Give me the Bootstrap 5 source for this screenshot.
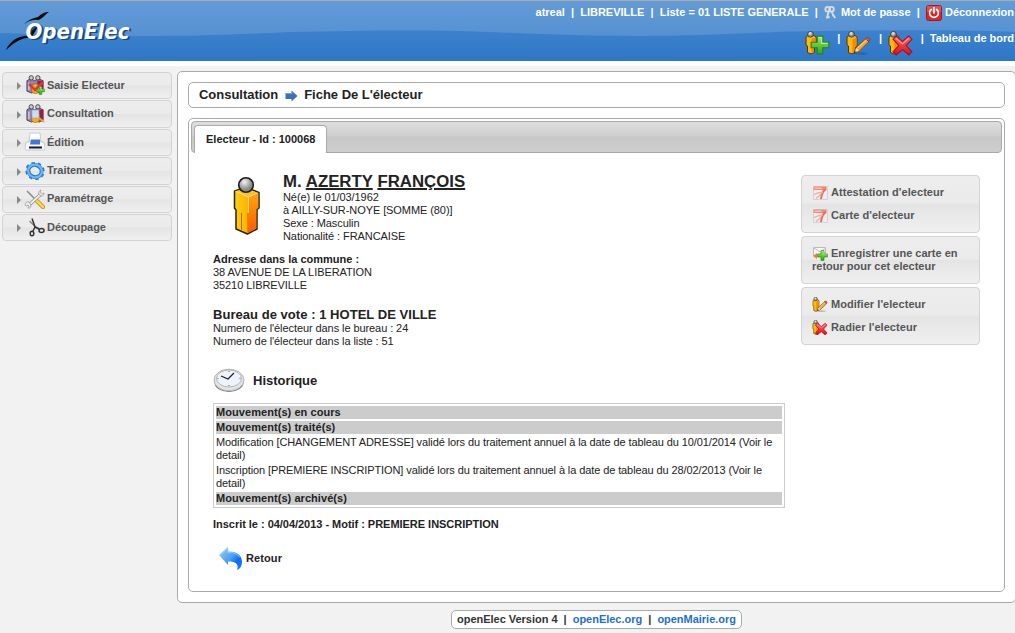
<!DOCTYPE html>
<html lang="fr">
<head>
<meta charset="utf-8">
<title>openElec - Fiche de l'électeur</title>
<link href="https://cdn.jsdelivr.net/npm/bootstrap@5.3.0/dist/css/bootstrap.min.css" rel="stylesheet">
<style>
body{font:11px/13px "Liberation Sans",Arial,sans-serif;color:#222;background:#f2f2f2;height:633px;overflow:hidden}
a{text-decoration:none;color:inherit}
svg{flex:none;display:block}
.topbar{height:66px;border-top:1px solid #aaa;border-bottom:5px solid #fff;background:linear-gradient(#4a8bd0,#2e77c7);position:relative;color:#fff}
.gloss{position:absolute;inset:0;width:100%;height:60px}
.topbar>.d-flex{position:relative;height:60px}
.logo{margin:8px 0 0 5px}
.userline{padding:5px 1px 0 0;height:19px;white-space:pre}
.userline svg{margin-top:-1px}
.shortcuts{padding:12px 1px 0 0;white-space:pre}
.shortcuts svg{margin:-1px 1.4px 0 0}
.side{width:172px;padding:6px 0 0 2px;gap:1px}
.soft{border:1px solid #d3d3d3;border-radius:4px;color:#555;background:linear-gradient(#ededed,#ebebeb 48%,#e4e4e4 51%,#f0f0f0)}
.side .soft{width:170px;height:27.4px;padding:0 0 .6px 14px}
.side .soft b{margin:0 0 0 2px;letter-spacing:-.04px}
.frame{background:#fff;border:1px solid #aaa;border-radius:5px}
.main{margin:5px -1px 0 5px;width:839px;height:532px;padding:10px}
.crumb{height:26px;width:817px;padding:0 10px 1px;font-size:13px;letter-spacing:-.02px}
.tabs-box{height:474px;width:817px;margin-top:10px;padding:2px}
.tabs-head{height:32px;border:1px solid #aaa;border-radius:4px;background:linear-gradient(#dedede,#cfcfcf 45%,#c8c8c8 50%,#cecece);padding:3px 0 0 2px}
.tab-on{width:133px;height:28px;background:#fff;border:1px solid #aaa;border-bottom:0;border-radius:4px 4px 0 0;padding:7px 0 0 11px}
.sheet{padding:22px 22px 0}
.fiche{width:573px}
.person{margin:1px 0 0 16px}
.name{font-size:16.8px;line-height:18px;margin-top:-2px;letter-spacing:.02px}
.name u{text-decoration-thickness:2px;text-underline-offset:1px}
.plain{letter-spacing:-.08px}
.plain b{letter-spacing:0}
.t13{font-size:13px;line-height:15px}
.plain .t13{letter-spacing:.04px}
.hist{border:1px solid #ccc;width:572px;padding:2px;gap:2px;display:grid}
.hist b{background:#ccc}
.hist b,.hist div{display:block;min-height:13px}
.plain .hist b{letter-spacing:.06px}
.hist div{padding-right:4px;letter-spacing:-.1px}
.actions{width:179px;gap:3px}
.actions .soft{padding:10px 10px;height:58px}
.actions a{display:flex;align-items:center;height:13px;margin-bottom:10px;font-weight:700;letter-spacing:.05px}
.actions svg{margin:0 3px 0 1px}
.foot{width:291px;height:19px;margin:7px auto 0 451px;padding:2px 5px;white-space:pre;color:#333;letter-spacing:-.02px}
.foot a{color:#1c70cc}
</style>
</head>
<body>
<svg width="0" height="0" class="position-absolute">
<defs>
<linearGradient id="or" x1="0" x2="1"><stop stop-color="#ffcf10"/><stop offset="1" stop-color="#f79b00"/></linearGradient>
<linearGradient id="or2" x1="0" y1="0" x2="0" y2="1"><stop stop-color="#ffa510"/><stop offset="1" stop-color="#ff5a00"/></linearGradient>
<radialGradient id="hd" cx=".4" cy=".3"><stop stop-color="#f4f4f4"/><stop offset="1" stop-color="#8b8b8b"/></radialGradient>
<linearGradient id="bl" x1="0" y1="0" x2="1" y2="1"><stop stop-color="#9ed0fb"/><stop offset=".5" stop-color="#4a9ff0"/><stop offset=".7" stop-color="#0a6cf0"/><stop offset="1" stop-color="#2080f0"/></linearGradient>
<linearGradient id="gr" x1="0" y1="0" x2="0" y2="1"><stop stop-color="#9aec5c"/><stop offset="1" stop-color="#2fa51c"/></linearGradient>
<linearGradient id="rd" x1="0" y1="0" x2="0" y2="1"><stop stop-color="#ff6a6a"/><stop offset="1" stop-color="#d60f18"/></linearGradient>
<symbol id="man" viewBox="0 0 28 60"><path d="M1.500 15 13 11.500l13 5V32l-2 1.500V53l-9.500 5L3 53V34l-1.500-2z" fill="url(#or)" stroke="#2b2010" stroke-width="1.500" stroke-linejoin="round"/><path d="M15.500 21 25.300 17v14.700l-2 1.500v19.300L14.500 57z" fill="url(#or2)"/><path d="M2.300 15.200l11-3 11.500 4.600-9.300 4z" fill="#ffc02a"/><path d="M15.500 21v16M2.300 15.200l13.200 5.800 9-4" stroke="#ffe98a" stroke-width=".9" fill="none"/><path d="M8.500 37v17" stroke="#b07000" stroke-width="1"/><path d="M14.500 37v19" stroke="#e98400" stroke-width="1"/><circle cx="13" cy="9" r="7.300" fill="url(#hd)" stroke="#1d1d1d" stroke-width="1.600"/></symbol>
<symbol id="mini" viewBox="0 0 12 24"><path d="M1 6 3 4.500h6l2 1.500v9l-1.500 1v5.500L6 23l-3.500-1.500V15L1 14z" fill="#ffb90c" stroke="#4c3a10"/><path d="M6.500 8 10.500 6.500v8l-1.500 1V21l-2.500 1z" fill="#f58a00"/><circle cx="5.500" cy="3.300" r="2.900" fill="url(#hd)" stroke="#333" stroke-width=".8"/></symbol>
<symbol id="plus" viewBox="0 0 18 18"><path d="M6.500 1h5v5.500H17v5h-5.500V17h-5v-5.500H1v-5h5.500z" fill="url(#gr)" stroke="#23851a"/><path d="M7.500 2.500h3v5H16" stroke="#c5f7a0" fill="none" opacity=".8"/></symbol>
<symbol id="cross" viewBox="0 0 20 20"><path d="M4 1 10 6l6-5 3 3-5.500 6L19 16l-3 3-6-5-6 5-3-3 5.500-6L1 4z" fill="url(#rd)" stroke="#b00b16"/><path d="M3.500 3 10 8.500 16 3" stroke="#ffa0a0" fill="none"/></symbol>
<symbol id="pencil" viewBox="0 0 18 18"><path d="M1 17l1.500-5L13 2.500l3 3L6 15.500z" fill="#e9a83a" stroke="#7c5417"/><path d="M13 2.500 14.500 1 17 3.500l-1.500 2z" fill="#e85a52" stroke="#8d342c"/><path d="M3 13l2 2" stroke="#f7dfb2" stroke-width="2"/><path d="M4.500 12 13.500 4" stroke="#ffdf8a"/><path d="M1 17l.5-2 1.200 1.300z" fill="#222"/></symbol>
<symbol id="addman" viewBox="0 0 25 26"><use href="#mini" x="0" y="0" width="12" height="24"/><use href="#plus" x="5" y="4" width="20" height="20"/></symbol>
<symbol id="editman" viewBox="0 0 25 26"><ellipse cx="15" cy="22.500" rx="7" ry="1.500" fill="#234" opacity=".25"/><use href="#mini" x="0" y="0" width="12" height="24"/><use href="#pencil" x="7" y="5" width="18" height="18"/></symbol>
<symbol id="delman" viewBox="0 0 25 26"><use href="#mini" x="0" y="0" width="12" height="24"/><use href="#cross" x="4" y="4" width="21" height="21"/></symbol>
<symbol id="pdf" viewBox="0 0 15 14"><path d="M.5.500h14v13H.5z" fill="#efeceb" stroke="#d6d2d1"/><path d="M.5.500h13v3.500H.5z" fill="#f08a7c"/><path d="M1.500 2.200h7" stroke="#fbd9d3"/><path d="M13 3C9 5 8.500 9 8 13" stroke="#e9705f" stroke-width="2" fill="none"/><path d="M1 8.500C4 7 7 6 10 6.500M3 12.500C5 11 7 9.500 8.500 7.500" stroke="#eeaaa2" stroke-width="1.200" fill="none"/></symbol>
<symbol id="crowd" viewBox="0 0 20 20"><path d="M1 6l4-2 4 2 4-2 5 2v11l-4 2-4-2-4 2-5-2z" fill="#8e82b8" stroke="#4a3d5c"/><path d="M12 6l6 0v10l-4 2-2-2z" fill="#a21846"/><path d="M3 8v8" stroke="#c3bbe0" stroke-width="2"/><circle cx="5.500" cy="3" r="2.300" fill="#ccc" stroke="#444"/><circle cx="12.500" cy="3" r="2.300" fill="#ccc" stroke="#444"/><path d="M6 11l4-2 4 2v7l-4 2-4-2z" fill="#ffac0b" stroke="#9d5905" stroke-width=".6"/></symbol>
</defs>
</svg>

<header class="topbar">
<svg class="gloss" viewBox="0 0 1015 60" preserveAspectRatio="none"><path d="M0 0H1015V31C970 28.500 880 29 790 30.500 730 33 690 35 640 35 590 35 550 33.500 500 31.500 450 28.500 370 29 290 31 230 34 190 35 140 35 90 35 45 33.500 0 32Z" fill="#fff" opacity=".14"/></svg>
<div class="d-flex justify-content-between">
<svg class="logo" width="135" height="46" viewBox="0 0 135 46"><path d="M1 41C5 32 12 28 20 27 25 26 27 20 34 16 30 22 28 29 22 29 13 30 8 35 1 41ZM18 16C23 11 28 9 33 8 36 5 39 3 44 3 40 5 38 10 33 11 27 10 22 13 18 16Z" fill="#050505"/><g font-family="DejaVu Sans" font-weight="700" font-style="oblique" font-size="16" transform="scale(1 1.38)"><text x="22.500" y="22.700" textLength="104" lengthAdjust="spacingAndGlyphs" fill="#0d2c50" opacity=".7">OpenElec</text><text x="20.500" y="21.500" textLength="104" lengthAdjust="spacingAndGlyphs" fill="#fff">OpenElec</text></g></svg>
<div>
<div class="userline d-flex justify-content-end fw-bold">atreal  |  LIBREVILLE  |  Liste = 01 LISTE GENERALE  |  <svg width="14" height="16" viewBox="0 0 15 16"><g fill="none" stroke="#d9dde2" stroke-width="2"><circle cx="4" cy="4" r="2.500"/><circle cx="8" cy="4" r="2.500"/><path d="M5 6.500 3 14M8 6.500l4 7M9 11l2-1M4 12l2 1"/></g></svg> Mot de passe  |  <svg width="16" height="16" viewBox="0 0 16 16"><rect x=".5" y=".5" width="15" height="15" rx="2" fill="#d5272a" stroke="#a9161a"/><path d="M1 1h14v6H1z" fill="#f27a77" opacity=".5"/><path d="M5.300 4.500a4.400 4.400 0 1 0 5.400 0M8 2.500V8" fill="none" stroke="#fff" stroke-width="1.700" stroke-linecap="round"/></svg> Déconnexion</div>
<div class="shortcuts d-flex justify-content-end fw-bold"><svg width="25" height="26"><use href="#addman"/></svg>  |  <svg width="25" height="26"><use href="#editman"/></svg>  |  <svg width="25" height="26"><use href="#delman"/></svg>  |  Tableau de bord</div>
</div>
</div>
</header>

<div class="d-flex">
<nav class="side d-flex flex-column">
<a class="soft d-flex align-items-center" href="#"><svg width="28" height="20" viewBox="0 0 28 20"><path d="M0 7l4 4-4 4z" fill="#888"/><use href="#crowd" x="9" y="0" width="19" height="19"/><path d="M12 9l6 6 8-8" stroke="#e2343a" stroke-width="2.500" fill="none"/><use href="#plus" x="19" y="11" width="9" height="9"/></svg><b>Saisie Electeur</b></a>
<a class="soft d-flex align-items-center" href="#"><svg width="28" height="20" viewBox="0 0 28 20"><path d="M0 7l4 4-4 4z" fill="#888"/><use href="#crowd" x="9" y="0" width="19" height="19"/><path d="M15 6h7v8h-7z" fill="#c5e5f6" stroke="#9cabc0" stroke-width=".7" opacity=".95"/><path d="M22 14l5 4" stroke="#e8a13a" stroke-width="2"/></svg><b>Consultation</b></a>
<a class="soft d-flex align-items-center" href="#"><svg width="28" height="20" viewBox="0 0 28 20"><path d="M0 7l4 4-4 4z" fill="#888"/><path d="M13 1h10l1 9H12z" fill="#fdfdfe" stroke="#c8ccd2"/><path d="M9 10h3v-1h12v1h3l1 6c0 2-1 2-2 2H10c-1 0-2 0-2-2z" fill="#f8f8fa" stroke="#b5b8be" stroke-width=".7"/><path d="M14 7.500h9v5H13z" fill="#3f78da"/><path d="M12 14.500h13v2H12z" fill="#15181c"/></svg><b>Édition</b></a>
<a class="soft d-flex align-items-center" href="#"><svg width="28" height="20" viewBox="0 0 28 20"><path d="M0 7l4 4-4 4z" fill="#888"/><g transform="rotate(20 18 10)" fill="none"><ellipse cx="18" cy="10" rx="8.300" ry="7.500" stroke="#2a7fd0" stroke-width="3" stroke-dasharray="3.200 3"/><ellipse cx="18" cy="10" rx="6.700" ry="6" stroke="#2479ca" stroke-width="3.800"/><ellipse cx="18" cy="10" rx="7" ry="6.300" stroke="#6cb8f8" stroke-width="2.200"/></g></svg><b>Traitement</b></a>
<a class="soft d-flex align-items-center" href="#"><svg width="28" height="20" viewBox="0 0 28 20"><path d="M0 7l4 4-4 4z" fill="#888"/><path d="M10 2l9 9" stroke="#888" stroke-width="1.500"/><path d="M19 11l7 7" stroke="#b98512" stroke-width="4" stroke-linecap="round"/><path d="M19 11l7 7" stroke="#ffd64a" stroke-width="2.600" stroke-linecap="round"/><path d="M11.500 16.500 24 5" stroke="#8c8c8c" stroke-width="3.200"/><path d="M11.500 16.500 24 5" stroke="#eee" stroke-width="1.800"/><path d="M24 1c-3 1-3 5 0 6 2 0 3-1 3-3l-2 1-2-2zM12 13c-3-1-5 2-3 4l2-1 1 1-1 2c3 1 4-3 1-6z" fill="#eee" stroke="#999" stroke-width=".8"/></svg><b>Paramétrage</b></a>
<a class="soft d-flex align-items-center" href="#"><svg width="28" height="20" viewBox="0 0 28 20"><path d="M0 7l4 4-4 4z" fill="#888"/><g fill="none" stroke="#333" stroke-width="1.500"><path d="M12.500 4l6 6 4 2" stroke="#888"/><path d="M15 1.500l3 8.500-2 4M18 10l4 2"/><ellipse cx="24.500" cy="13.500" rx="2.500" ry="2"/><ellipse cx="15" cy="16.500" rx="1.800" ry="2.300"/></g></svg><b>Découpage</b></a>
</nav>

<main class="main frame">
<div class="crumb frame d-flex align-items-center fw-bold">Consultation<svg style="margin:2px 6px 0 7px" width="13" height="12" viewBox="0 0 12 12"><path d="M0 3h6V.5l6 5.500-6 5.500V9H0z" fill="#3c72b5"/><path d="M0 3.500h6.500V1.500" stroke="#7aa4d6" fill="none"/></svg><span>Fiche De L'électeur</span></div>
<section class="tabs-box frame">
<div class="tabs-head"><div class="tab-on fw-bold">Electeur - Id : 100068</div></div>
<div class="sheet d-flex justify-content-between">
<div class="fiche plain">
<div class="d-flex">
<svg class="person" width="36" height="62" viewBox="0 0 36 62"><use href="#man" x="4" y="0" width="28" height="60"/></svg>
<div style="margin-left:18px"><div class="name fw-bold">M. <u>AZERTY</u> <u>FRANÇOIS</u></div>Né(e) le 01/03/1962<br>à AILLY-SUR-NOYE [SOMME (80)]<br>Sexe : Masculin<br>Nationalité : FRANCAISE</div>
</div>
<div style="margin-top:10px"><b>Adresse dans la commune :</b><br>38 AVENUE DE LA LIBERATION<br>35210 LIBREVILLE</div>
<div style="margin-top:15px"><b class="t13 d-block">Bureau de vote : 1 HOTEL DE VILLE</b>Numero de l'électeur dans le bureau : 24<br>Numero de l'électeur dans la liste : 51</div>
<div class="d-flex align-items-center" style="margin-top:19px;height:26px">
<svg width="32" height="26" viewBox="0 0 32 26"><ellipse cx="16" cy="15.500" rx="14.500" ry="9.500" fill="#777"/><ellipse cx="16" cy="13" rx="15" ry="10.800" fill="#e4e4e4" stroke="#b5b5b5"/><ellipse cx="16" cy="11.500" rx="12.500" ry="8.500" fill="#edf3fa" stroke="#b4b4b4"/><path d="M8 9l7 3 6-6" fill="none" stroke="#222" stroke-width="1.300"/><path d="M16 4v1M16 18v1M4.500 11.500h1M26.500 11.500h1" stroke="#666"/></svg><b class="t13 ms-2" style="letter-spacing:0">Historique</b></div>
<div class="hist" style="margin-top:10px"><b>Mouvement(s) en cours</b><b>Mouvement(s) traité(s)</b><div>Modification [CHANGEMENT ADRESSE] validé lors du traitement annuel à la date de tableau du 10/01/2014 (Voir le detail)</div><div>Inscription [PREMIERE INSCRIPTION] validé lors du traitement annuel à la date de tableau du 28/02/2013 (Voir le detail)</div><b>Mouvement(s) archivé(s)</b></div>
<b class="d-block" style="margin-top:10px;letter-spacing:-.03px">Inscrit le : 04/04/2013 - Motif : PREMIERE INSCRIPTION</b>
<a href="#" class="d-flex align-items-center fw-bold" style="margin:15px 0 0 6px"><svg width="24" height="25" viewBox="0 0 24 25"><path d="M0 9 9 1v4.500c9-.5 14 4 14 10.500 0 4-2 7-5 8 2-6-1-8.500-9-8.500V19z" fill="url(#bl)"/><path d="M1 9l8-7v4.500c5 0 9 1 12 5" stroke="#a7d5fc" fill="none" stroke-width=".7"/></svg><span style="margin-left:3px;letter-spacing:.1px">Retour</span></a>
</div>
<aside class="actions d-flex flex-column">
<div class="soft"><a href="#"><svg width="15" height="14"><use href="#pdf"/></svg>Attestation d'electeur</a><a href="#"><svg width="15" height="14"><use href="#pdf"/></svg>Carte d'electeur</a></div>
<div class="soft fw-bold" style="height:48px"><svg class="d-inline-block align-top" style="margin-bottom:-3px" width="15" height="14" viewBox="0 0 15 14"><path d="M.5.500h12v8H.5z" fill="#f5f5f5" stroke="#bbb"/><path d="M1 1l6 4 6-4" fill="none" stroke="#bbb"/><path d="M0 9l4-3v6z" fill="#f08022"/><use href="#plus" x="4" y="3" width="11" height="11"/></svg>Enregistrer une carte en retour pour cet electeur</div>
<div class="soft"><a href="#"><svg width="16" height="15" viewBox="0 0 25 24" style="margin-left:0"><use href="#editman" width="25" height="26"/></svg>Modifier l'electeur</a><a href="#"><svg width="16" height="15" viewBox="0 0 25 24" style="margin-left:0"><use href="#delman" width="25" height="26"/></svg>Radier l'electeur</a></div>
</aside>
</div>
</section>
</main>
</div>
<footer class="foot frame fw-bold">openElec Version 4  |  <a href="#">openElec.org</a>  |  <a href="#">openMairie.org</a></footer>
<script src="https://cdn.jsdelivr.net/npm/bootstrap@5.3.0/dist/js/bootstrap.bundle.min.js"></script>
</body>
</html>
